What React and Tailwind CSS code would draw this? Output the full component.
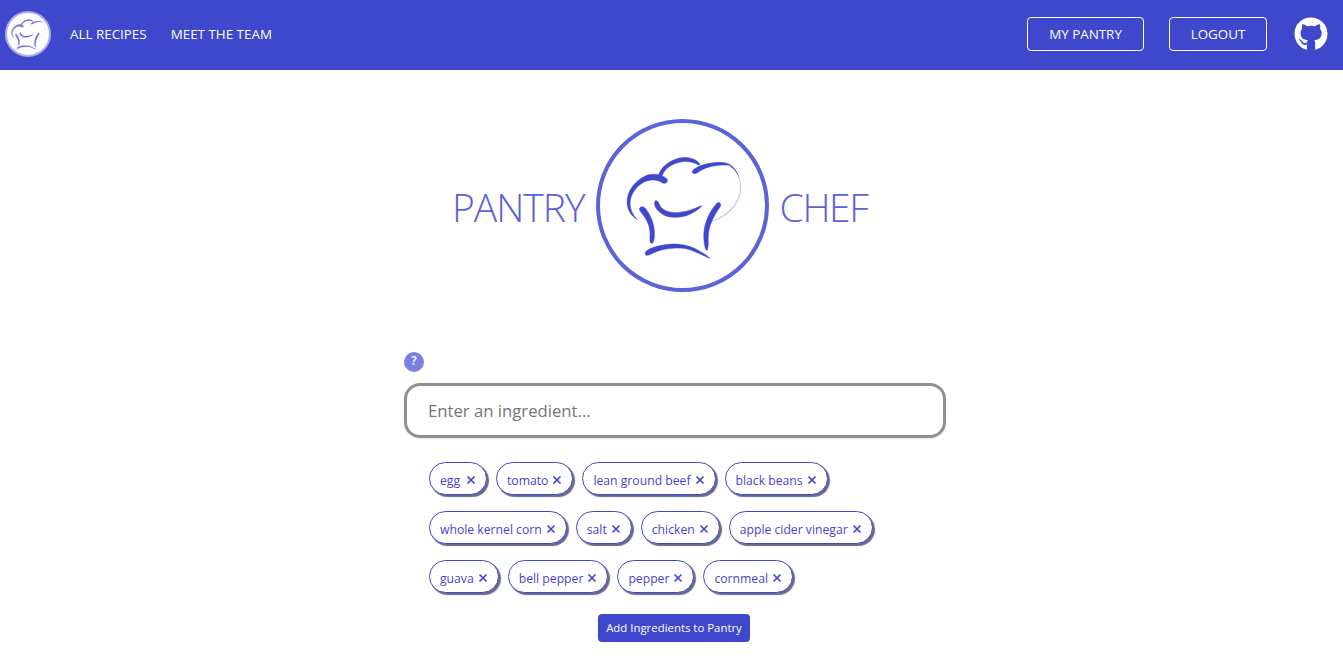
import React from "react";
import { FaGithub } from "react-icons/fa";

const FONT = "font-['Open_Sans','Noto_Sans',sans-serif]";

function Hat({ className }) {
  return (
    <svg viewBox="85 115 380 340" className={className} fill="currentColor">
      <g stroke="currentColor" strokeWidth="1.5" strokeLinejoin="round">
        <path d="M139 326C118 313 106 290 110 262C115 232 140 205 170 193C190 187 215 192 229 205C232 214 225 220 216 217C200 206 180 204 160 214C136 227 120 250 118 275C118 295 126 312 139 326Z" />
        <path d="M203 196C208 170 235 150 265 142C290 137 315 143 327 160C327 164 323 164 319 161C300 150 275 150 255 158C235 165 220 178 213 198C210 203 204 202 203 196Z" />
        <path d="M305 180C320 165 350 156 385 155C400 155 412 158 420 164C412 163 395 163 380 164C355 166 335 174 318 187C308 191 302 187 305 180Z" />
        <path d="M193 270C200 268 204 274 206 282C214 300 240 308 265 305C290 302 312 294 332 284C332 289 315 303 290 313C265 322 235 322 215 310C199 300 187 285 193 270Z" />
        <path d="M147 292C152 284 162 288 168 298C182 318 193 345 191 375C190 387 188 398 183 397C177 396 177 387 178 372C179 347 168 325 153 307C148 301 145 297 147 292Z" />
        <path d="M378 277C386 272 392 280 388 288C370 312 352 345 352 380C352 395 353 410 349 418C344 420 341 405 339 385C336 345 352 305 378 277Z" />
        <path d="M164 424C172 412 200 404 235 400C270 397 300 405 325 420C338 427 350 435 357 442C340 436 320 424 295 416C265 408 230 411 200 421C185 427 170 436 165 432C163 430 163 427 164 424Z" />
      </g>
      <g fill="none" stroke="currentColor" strokeOpacity="0.35" strokeWidth="3">
        <path d="M418 164C438 178 450 205 449 235C447 270 420 305 385 322C375 327 368 329 360 331" />
      </g>
      <path d="M418 162C432 172 442 188 446 205C441 190 430 175 416 166Z" />
    </svg>
  );
}

function Chip({ label }) {
  return (
    <span className="inline-flex h-[33px] items-center justify-between gap-[4px] rounded-[17px] border border-[#3f47cc] bg-white pl-[10px] pr-[10px] pt-[5px] text-[12.2px] text-[#4a3fd0] shadow-[2px_2px_1px_#666a8a] first:min-w-[58px]">
      {label}
      <svg viewBox="0 0 10 10" className="mb-[2px] h-[10px] w-[10px] text-[#3f47cc]" stroke="currentColor" strokeWidth="1.7" fill="none">
        <path d="M1.5 1.5L8.5 8.5M8.5 1.5L1.5 8.5" />
      </svg>
    </span>
  );
}

const rows = ["egg", "tomato", "lean ground beef", "black beans", "whole kernel corn", "salt", "chicken", "apple cider vinegar", "guava", "bell pepper", "pepper", "cornmeal"];

export default function App() {
  return (
    <div className={`${FONT} min-h-[664px] bg-white`}>
      <nav className="flex h-[70px] items-center bg-[#3f47cc] pb-[2px] pl-[5px] pr-[15px] text-[13.4px] text-white">
        <div className="flex h-[46px] w-[46px] items-center justify-center rounded-full border-2 border-[#a9ade8] bg-white">
          <Hat className="w-[38px] text-[#6a70d6]" />
        </div>
        <a className="ml-[19px]">ALL RECIPES</a>
        <a className="ml-[24px]">MEET THE TEAM</a>
        <div className="ml-auto flex items-center">
          <button className="h-[34px] w-[117px] rounded-[4px] border border-white">MY PANTRY</button>
          <button className="ml-[25px] h-[34px] w-[98px] rounded-[4px] border border-white">LOGOUT</button>
          <FaGithub className="ml-[27px] h-[34px] w-[34px]" />
        </div>
      </nav>

      <main className="flex flex-col items-center pl-[7px]">
        <div className="mt-[49px] flex w-[542px] items-center pl-[48px] text-[#5a63d8]">
          <span className="mt-[2px] text-[39px] font-light leading-none tracking-[-1px]">PANTRY</span>
          <div className="ml-[11px] mr-[11px] flex h-[173px] w-[173px] shrink-0 items-center justify-center rounded-full border-[4px] border-[#5a63d8]">
            <Hat className="w-[127px] text-[#3f47cc]" />
          </div>
          <span className="mt-[2px] text-[39px] font-light leading-none tracking-[-1.4px]">CHEF</span>
        </div>

        <div className="mt-[60px] w-[542px]">
          <div className="flex h-[20px] w-[20px] items-center justify-center rounded-full bg-[#7a80e0] pb-[3px] text-[12px] font-semibold text-white">?</div>
          <div className="mt-[11px] flex h-[55px] items-center rounded-[16px] border-[3px] border-[#909090] pl-[21px] text-[16.7px] text-[#757575] shadow-[0_1px_2px_rgba(0,0,0,0.1)]">
            Enter an ingredient...
          </div>
          <div className="mt-[24px] flex flex-wrap gap-x-[9px] gap-y-[16px] pl-[25px] pr-[60px]">
            {rows.map((r) => (
              <Chip key={r} label={r} />
            ))}
          </div>
          <div className="mt-[21px] flex justify-center pr-[2px]">
            <button className="h-[28px] w-[152px] rounded-[4px] bg-[#3f47cc] text-[11.4px] text-white">Add Ingredients to Pantry</button>
          </div>
        </div>
      </main>
    </div>
  );
}
